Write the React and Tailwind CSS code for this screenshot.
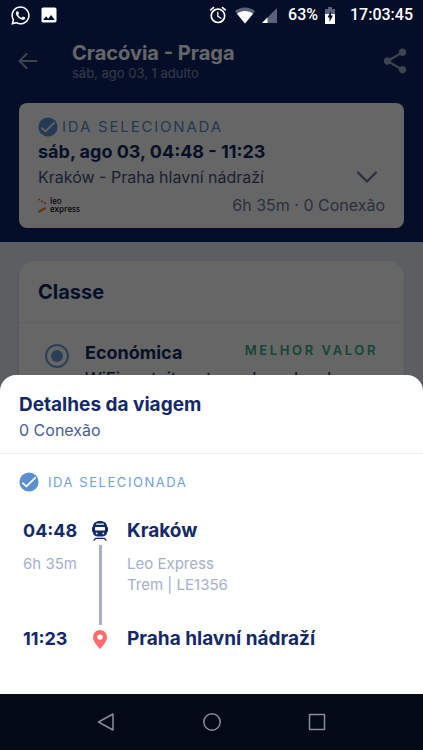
import React, { useState } from "react";
import { FaWhatsapp } from "react-icons/fa";
import { MdAlarm, MdImage, MdShare } from "react-icons/md";
import { ChevronDown } from "lucide-react";

const CheckBadge = ({ className }) => (
  <svg viewBox="0 0 20 20" className={className} aria-hidden="true">
    <circle cx="10" cy="10" r="9.6" fill="#5b8fd0" />
    <path d="M3.800 11.200l3.600 3.200 8.800-8.600" fill="none" stroke="#fff" strokeWidth="1.700" strokeLinecap="round" strokeLinejoin="round" />
  </svg>
);

const WifiIcon = () => (
  <svg viewBox="0 0 20 17" className="h-[17px] w-5" aria-hidden="true">
    <path d="M10 16.500L0 4.200C2.800 1.800 6.200.5 10 .5s7.200 1.300 10 3.700z" fill="#5a6178" />
    <path d="M10 16.500L2 6.700C4.200 4.900 7 4 10 4s5.800.9 8 2.700z" fill="#fff" />
  </svg>
);

const SignalIcon = () => (
  <svg viewBox="0 0 15 15" className="size-[15px]" aria-hidden="true">
    <path d="M15 0v15H0z" fill="#5a6178" />
    <path d="M5.500 9.500V15H0z" fill="#fff" />
  </svg>
);

const BatteryIcon = () => (
  <svg viewBox="0 0 10 17" className="h-[17px] w-[10px]" aria-hidden="true">
    <path d="M3 0h4v2h3v5H0V2h3z" fill="#5a6178" />
    <path d="M0 7h10v10H0z" fill="#fff" />
    <path d="M6 4L2.500 10.500h2V15L8 8.500H6z" fill="#050e29" />
  </svg>
);

const BackIcon = () => (
  <svg viewBox="0 0 20 16" className="h-4 w-5" fill="none" stroke="currentColor" strokeWidth="2" strokeLinecap="round" strokeLinejoin="round" aria-hidden="true">
    <path d="M8.500 1L1.500 8l7 7M1.500 8H18.500" />
  </svg>
);

const TrainIcon = () => (
  <svg viewBox="0 0 16 20" className="h-5 w-4" aria-hidden="true">
    <path
      d="M8 0c4.400 0 7 2.200 7.200 6 .5.100.8.500.8 1v3c0 .6-.3 1-.8 1.100-.3 2.900-1.900 4.400-4.700 4.400h-5c-2.800 0-4.400-1.500-4.700-4.400C.3 11 0 10.600 0 10V7c0-.5.3-.9.8-1C1 2.200 3.600 0 8 0z"
      fill="#132968"
    />
    <rect x="4" y="2.600" width="8" height="1.200" rx=".6" fill="#fff" />
    <rect x="3" y="6" width="10" height="3.600" rx=".8" fill="#fff" />
    <circle cx="4.700" cy="12.400" r=".9" fill="#fff" />
    <circle cx="11.300" cy="12.400" r=".9" fill="#fff" />
    <path d="M3.500 17.300h9M2 19.300l1.500-2M14 19.300l-1.500-2" stroke="#132968" strokeWidth="1.200" fill="none" strokeLinecap="round" />
  </svg>
);

const PinIcon = () => (
  <svg viewBox="0 0 14 19" className="h-[19px] w-[14px]" aria-hidden="true">
    <path fillRule="evenodd" d="M7 0a7 7 0 0 1 7 7c0 4.500-4 8.500-7 12C4 15.500 0 11.500 0 7a7 7 0 0 1 7-7zm0 4.400a2.700 2.700 0 1 0 0 5.400 2.700 2.700 0 0 0 0-5.400z" fill="#ff6a6a" />
  </svg>
);

const LeoLogo = () => (
  <div className="flex items-center gap-1">
    <svg viewBox="0 0 8 15" className="h-[15px] w-2" aria-hidden="true">
      <circle cx="1.200" cy="1.500" r="1.100" fill="#f47b20" />
      <circle cx="4" cy="3.300" r="1.100" fill="#f47b20" />
      <circle cx="6.900" cy="5.200" r="1.100" fill="#f47b20" />
      <path d="M1.200 13.500L7 10.200" stroke="#f47b20" strokeWidth="2.200" strokeLinecap="round" />
    </svg>
    <p className="font-['Open_Sans',sans-serif] text-[8px] leading-[8px] font-semibold text-[#1b1b1b]">
      leo
      <br />
      express
    </p>
  </div>
);

const StatusBar = () => (
  <div className="flex h-[30px] shrink-0 items-center bg-[#050e29] px-[10px] font-[Roboto,sans-serif] text-base font-medium text-white">
    <FaWhatsapp className="size-[21px]" />
    <MdImage className="ml-2 size-5" />
    <div className="ml-auto flex items-center gap-[7px]">
      <MdAlarm className="size-5" />
      <WifiIcon />
      <SignalIcon />
      <span className="ml-1">63%</span>
      <BatteryIcon />
      <span className="ml-2">17:03:45</span>
    </div>
  </div>
);

const Header = () => {
  const [open, setOpen] = useState(false);

  return (
    <header className="bg-[#0c2468] pb-[14px]">
      <div className="flex h-[62px] items-center pr-[13px] pl-[18px] text-white">
        <button aria-label="Voltar" className="text-white/60">
          <BackIcon />
        </button>
        <div className="ml-[34px]">
          <h1 className="text-xl leading-6 font-bold">Cracóvia - Praga</h1>
          <p className="text-[13px] leading-4 text-white/50">sáb, ago 03, 1 adulto</p>
        </div>
        <button aria-label="Compartilhar" className="ml-auto text-white/60">
          <MdShare className="size-[30px]" />
        </button>
      </div>

      <section className="mx-[19px] mt-[11px] rounded-lg bg-white px-[19px] pt-3 pb-[11px]">
        <div className="flex h-6 items-center gap-1">
          <CheckBadge className="size-5" />
          <span className="text-[15px] tracking-[0.12em] text-[#5b8fd0]">IDA SELECIONADA</span>
        </div>
        <h2 className="text-lg leading-[26px] font-bold text-[#132968]">sáb, ago 03, 04:48 - 11:23</h2>
        <div className="flex h-6 items-center justify-between">
          <p className="text-base text-[#3f5088]">Kraków - Praha hlavní nádraží</p>
          <button onClick={() => setOpen(!open)} aria-label="Mostrar detalhes" aria-expanded={open} className="text-[#6b7799]">
            <ChevronDown className="size-9" strokeWidth={1.5} />
          </button>
        </div>
        <div className="mt-1 flex h-6 items-center justify-between">
          <LeoLogo />
          <p className="text-base text-[#6b7799]">6h 35m · 0 Conexão</p>
        </div>
      </section>
    </header>
  );
};

const ClassCard = () => (
  <section className="mx-[19px] mt-[19px] rounded-2xl bg-white pb-6 shadow-md">
    <h2 className="flex h-[61px] items-center px-[19px] text-xl font-bold text-[#132968]">Classe</h2>
    <label className="flex border-t border-[#eceff5] pt-[17px] pr-[26px] pl-[26px]">
      <input
        type="radio"
        name="classe"
        defaultChecked
        className="mt-1 grid size-6 shrink-0 appearance-none place-content-center rounded-full border-2 border-[#6f9ddb] before:size-3 before:rounded-full before:bg-[#6f9ddb] before:content-['']"
      />
      <div className="ml-4 min-w-0 flex-1 text-[#132968]">
        <div className="flex items-start justify-between">
          <span className="text-lg leading-[26px] font-bold">Económica</span>
          <span className="text-[13px] leading-5 font-semibold tracking-[0.2em] text-[#2fb286]">MELHOR VALOR</span>
        </div>
        <p className="text-[17px] leading-[26px] whitespace-nowrap">WiFi gratuito e tomadas a bordo</p>
      </div>
    </label>
  </section>
);

const TripSheet = () => (
  <section role="dialog" aria-label="Detalhes da viagem" className="rounded-t-2xl bg-white pb-[41px] text-[#132968]">
    <div className="border-b border-[#eceef2] px-[19px] pt-4 pb-3">
      <h2 className="text-[19px] leading-7 font-bold">Detalhes da viagem</h2>
      <p className="text-base leading-[22px] text-[#4a5c96]">0 Conexão</p>
    </div>

    <div className="flex h-10 items-end gap-[9px] px-[19px]">
      <CheckBadge className="mb-[2px] size-5" />
      <span className="text-[13px] leading-6 tracking-[0.12em] text-[#6f9fdb]">IDA SELECIONADA</span>
    </div>

    <div className="mt-[23px] grid grid-cols-[64px_26px_1fr] px-[23px]">
      <span className="text-lg leading-7 font-bold">04:48</span>
      <span className="flex items-center justify-center">
        <TrainIcon />
      </span>
      <span className="pl-[14px] text-[19px] leading-7 font-bold">Kraków</span>

      <span className="pt-2 text-[15px] leading-[21px] text-[#a7afcb]">6h 35m</span>
      <span className="flex justify-center">
        <span className="w-[3px] bg-[#a7afcb]" />
      </span>
      <div className="pt-2 pb-[30px] pl-[14px] text-[15px] leading-[21px] text-[#a7afcb]">
        <p>Leo Express</p>
        <p>Trem | LE1356</p>
      </div>

      <span className="text-lg leading-7 font-bold">11:23</span>
      <span className="flex items-center justify-center">
        <PinIcon />
      </span>
      <span className="pl-[14px] text-[19px] leading-7 font-bold">Praha hlavní nádraží</span>
    </div>
  </section>
);

const NavBar = () => (
  <nav className="flex h-14 shrink-0 items-center bg-[#020917] px-[53px] text-[#8b8d94]">
    <button aria-label="Voltar" className="flex flex-1 justify-center">
      <svg viewBox="0 0 18 18" className="size-[18px]" fill="none" stroke="currentColor" strokeWidth="1.500" strokeLinejoin="round">
        <path d="M16 1v16L1.500 9z" />
      </svg>
    </button>
    <button aria-label="Início" className="flex flex-1 justify-center">
      <svg viewBox="0 0 18 18" className="size-[18px]" fill="none" stroke="currentColor" strokeWidth="1.500">
        <circle cx="9" cy="9" r="8.200" />
      </svg>
    </button>
    <button aria-label="Recentes" className="flex flex-1 justify-center">
      <svg viewBox="0 0 18 18" className="size-[18px]" fill="none" stroke="currentColor" strokeWidth="1.500" strokeLinejoin="round">
        <rect x="1.500" y="1.500" width="15" height="15" />
      </svg>
    </button>
  </nav>
);

export default function App() {
  return (
    <div className="flex h-screen flex-col font-[Inter,sans-serif]">
      <StatusBar />
      <main className="relative flex-1 overflow-hidden bg-[#e8ecf4]">
        <Header />
        <ClassCard />
        {/* Scrim with the bottom sheet */}
        <div className="absolute inset-0 flex flex-col justify-end bg-black/60">
          <TripSheet />
        </div>
      </main>
      <NavBar />
    </div>
  );
}
